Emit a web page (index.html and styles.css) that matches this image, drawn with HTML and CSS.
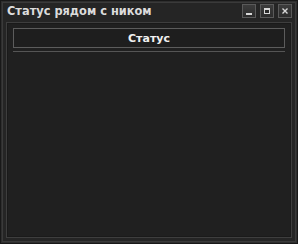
FILE: index.html
```html
<!DOCTYPE html>
<html>
<head>
<meta charset="utf-8">
<link rel="stylesheet" href="styles.css">
</head>
<body>
<div class="window">
  <div class="titlebar">
    <div class="title">Статус рядом с ником</div>
    <div class="buttons">
      <div class="btn"><svg width="14" height="14" viewBox="0 0 14 14"><rect x="4" y="9" width="6" height="2" fill="#d8d8d8"/></svg></div>
      <div class="btn"><svg width="14" height="14" viewBox="0 0 14 14"><rect x="4" y="4" width="6" height="6" fill="#d8d8d8"/><rect x="5" y="6" width="4" height="3" fill="#2a2a2a"/></svg></div>
      <div class="btn"><svg width="14" height="14" viewBox="0 0 14 14"><path d="M4.5 4.5 L9.5 9.5 M9.5 4.5 L4.5 9.5" stroke="#d8d8d8" stroke-width="1.4"/></svg></div>
    </div>
  </div>
  <div class="panel">
    <div class="header">Статус</div>
    <div class="rule"></div>
  </div>
</div>
</body>
</html>
```
FILE: styles.css
```css
html, body {
  margin: 0;
  padding: 0;
  background: #141414;
}
.window {
  width: 298px;
  height: 244px;
  box-sizing: border-box;
  background: #252525;
  border: 1px solid #181818;
  box-shadow: inset 0 0 0 1px #2e2e2e, inset 0 0 0 2px #3a3a3a;
  display: flex;
  flex-direction: column;
  font-family: "DejaVu Sans", sans-serif;
}
.titlebar {
  height: 21px;
  display: flex;
  align-items: center;
  justify-content: space-between;
  padding: 0 5px 0 6px;
}
.title {
  color: #dcdcdc;
  font-size: 11.4px;
  font-weight: bold;
  margin-top: -1px;
}
.buttons {
  display: flex;
  gap: 4px;
  margin-top: -1px;
}
.btn {
  width: 14px;
  height: 14px;
  box-sizing: border-box;
  border: 1px solid #5a5a5a;
  background: linear-gradient(#3c3c3c, #2c2c2c);
  display: flex;
}
.btn svg {
  margin: -1px;
}
.panel {
  flex: 1;
  margin: 0 5px 5px 5px;
  border: 1px solid #3e3e3e;
  box-shadow: inset 0 0 0 1px #1a1a1a;
  background: #202020;
  padding: 5px 6px;
}
.header {
  height: 20px;
  box-sizing: border-box;
  border: 1px solid #5c5c5c;
  background: #1e1e1e;
  color: #f0f0f0;
  font-size: 11px;
  font-weight: bold;
  display: flex;
  align-items: center;
  justify-content: center;
}
.rule {
  margin-top: 3px;
  height: 1px;
  background: #555;
}
```
